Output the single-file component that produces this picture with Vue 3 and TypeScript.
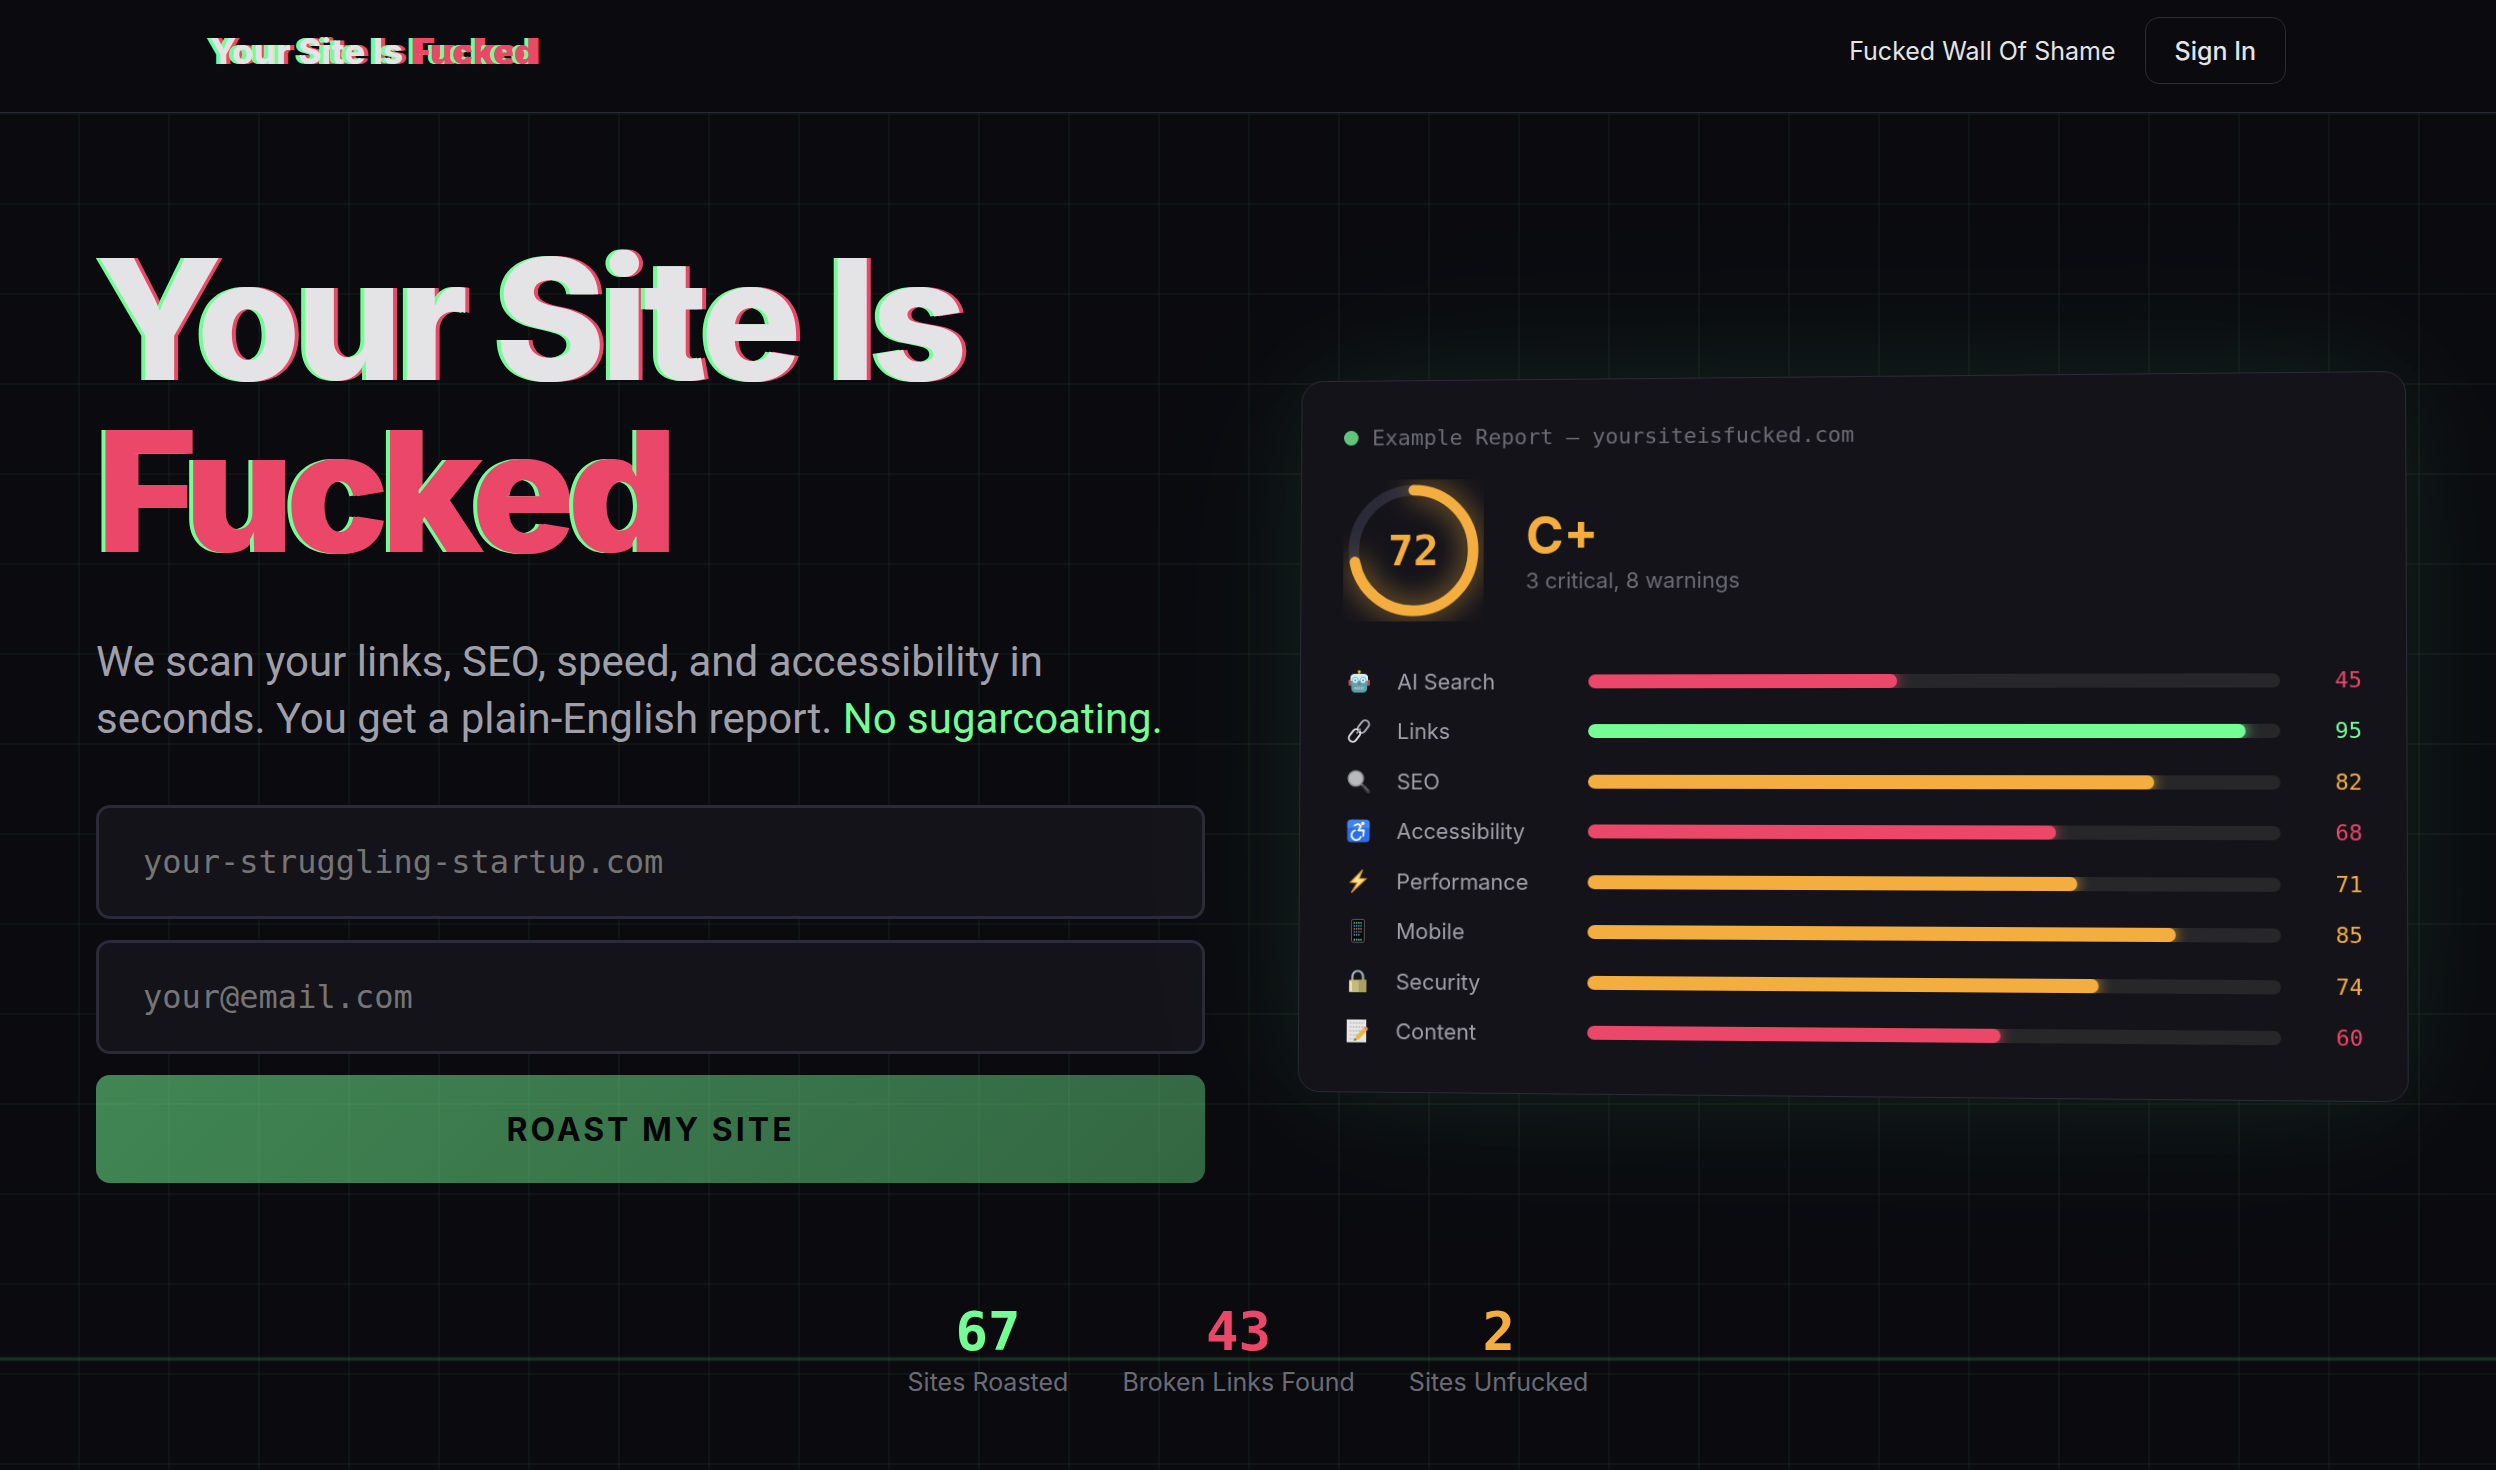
<script setup lang="ts">
import { ref } from 'vue'

type Tone = 'good' | 'warn' | 'bad'

interface Check {
  icon: string
  label: string
  score: number
  tone: Tone
}

interface Stat {
  value: number
  label: string
  tone: Tone
}

const site = ref('')
const email = ref('')

const checks: Check[] = [
  { icon: 'robot', label: 'AI Search', score: 45, tone: 'bad' },
  { icon: 'link', label: 'Links', score: 95, tone: 'good' },
  { icon: 'lens', label: 'SEO', score: 82, tone: 'warn' },
  { icon: 'access', label: 'Accessibility', score: 68, tone: 'bad' },
  { icon: 'bolt', label: 'Performance', score: 71, tone: 'warn' },
  { icon: 'phone', label: 'Mobile', score: 85, tone: 'warn' },
  { icon: 'lock', label: 'Security', score: 74, tone: 'warn' },
  { icon: 'memo', label: 'Content', score: 60, tone: 'bad' },
]

const stats: Stat[] = [
  { value: 67, label: 'Sites Roasted', tone: 'good' },
  { value: 43, label: 'Broken Links Found', tone: 'bad' },
  { value: 2, label: 'Sites Unfucked', tone: 'warn' },
]
</script>

<template>
  <div class="page">
    <header class="topbar">
      <div class="topbar-inner">
        <a class="logo glitch" href="#">Your Site Is <span class="f-word">Fucked</span></a>
        <nav class="nav">
          <a class="nav-link" href="#shame">Fucked Wall Of Shame</a>
          <button class="sign-in" type="button">Sign In</button>
        </nav>
      </div>
    </header>

    <main class="main">
      <section class="hero">
        <div class="pitch">
          <h1 class="title glitch">Your Site Is<br><span class="f-word">Fucked</span></h1>
          <p class="lead">
            We scan your links, SEO, speed, and accessibility in seconds. You get a plain-English report.
            <span class="accent">No sugarcoating.</span>
          </p>
          <form class="form" @submit.prevent>
            <input v-model="site" class="field" type="text" aria-label="Website address" placeholder="your-struggling-startup.com">
            <input v-model="email" class="field" type="email" aria-label="Email address" placeholder="your@email.com">
            <button class="roast" type="submit">ROAST MY SITE</button>
          </form>
        </div>

        <article class="card">
          <div class="card-head"><span class="dot"></span>Example Report — yoursiteisfucked.com</div>
          <div class="grade">
            <div class="ring">
              <svg class="ring-svg" viewBox="0 0 80 80" aria-hidden="true">
                <circle class="ring-track" cx="40" cy="40" r="34" />
                <circle class="ring-fill" cx="40" cy="40" r="34" pathLength="100" stroke-dasharray="72 100" transform="rotate(-90 40 40)" />
              </svg>
              <span class="ring-value">72</span>
            </div>
            <div class="verdict">
              <div class="letter">C+</div>
              <div class="summary">3 critical, 8 warnings</div>
            </div>
          </div>
          <ul class="checks">
            <li v-for="check in checks" :key="check.label" class="check">
              <svg class="icon" viewBox="0 0 24 24" aria-hidden="true">
                <g v-if="check.icon === 'robot'">
                  <path d="M12 1v5" stroke="#b8653f" stroke-width="1.6" />
                  <circle cx="12" cy="1.8" r="1.6" fill="#f2b63c" />
                  <rect x="1" y="10" width="3" height="6" rx="1" fill="#c9483c" />
                  <rect x="20" y="10" width="3" height="6" rx="1" fill="#c9483c" />
                  <path d="M3 7q1-3 5-3h8q4 0 5 3l-1 13q-1 3-4 3H8q-3 0-4-3z" fill="#56a2b0" />
                  <path d="M3 7q1-3 5-3h8q4 0 5 3v4H3z" fill="#d5eef0" />
                  <circle cx="8" cy="10.500" r="3" fill="#f4ffff" stroke="#4fb9d2" />
                  <circle cx="16" cy="10.500" r="3" fill="#f4ffff" stroke="#4fb9d2" />
                  <circle cx="8" cy="10.500" r="1" fill="#2c8095" />
                  <circle cx="16" cy="10.500" r="1" fill="#2c8095" />
                  <path d="m12 12 1.500 3h-3z" fill="#d54c46" />
                  <path d="M7 18.500h10" stroke="#c9b79f" stroke-width="2.400" stroke-dasharray="1.700 .600" />
                </g>
                <g v-else-if="check.icon === 'link'" fill="none" stroke-width="2">
                  <rect x="9.500" y="3.500" width="14" height="8" rx="4" stroke="#a9a9b2" transform="rotate(-52 16.500 7.500)" />
                  <rect x="0.500" y="12.500" width="14" height="8" rx="4" stroke="#d9dbe6" transform="rotate(-52 7.500 16.500)" />
                  <path d="m9.500 14.500 4-5" stroke="#8d8d96" />
                </g>
                <g v-else-if="check.icon === 'lens'">
                  <path d="m15 15 2.500 2.500" stroke="#9a9aa0" stroke-width="2.400" />
                  <path d="m17 17 5 5.500" stroke="#3b3b40" stroke-width="3.600" stroke-linecap="round" />
                  <path d="m17.500 16.500 4.500 5" stroke="#83838a" stroke-width="1" />
                  <circle cx="9" cy="9" r="7.800" fill="#b9babd" stroke="#85878d" stroke-width="1.600" />
                </g>
                <g v-else-if="check.icon === 'access'">
                  <rect x="0.500" y="0.500" width="23" height="23" rx="4" fill="#2c6fe4" />
                  <path d="M4 1h16q3 0 3.500 3v5H.500V4Q1 1 4 1z" fill="#5a9af0" opacity=".5" />
                  <g fill="none" stroke="#fff" stroke-width="1.800" stroke-linecap="round" stroke-linejoin="round">
                    <path d="M8 6.500 11.500 5l3 2-2.500 4.500h5.500L17 17" />
                    <path d="M8.500 11.500a5 5 0 1 0 6 6.500" />
                  </g>
                  <circle cx="16.500" cy="4.500" r="1.800" fill="#fff" />
                </g>
                <path v-else-if="check.icon === 'bolt'" d="M16.500.500 4 13l7 .500L5 23.500l15-14-7-.500z" fill="#ffe58a" stroke="#d5922b" stroke-width="1.200" />
                <g v-else-if="check.icon === 'phone'">
                  <rect x="5.500" y="0.500" width="13" height="23" rx="1.500" fill="#060608" stroke="#57575c" />
                  <g stroke-width="1.500" stroke-dasharray="1.500 .800">
                    <path d="M7.500 4h9" stroke="#67c977" />
                    <path d="M7.500 7h9" stroke="#5598c8" />
                    <path d="M7.500 10h9" stroke="#b88d67" />
                    <path d="M7.500 13h9" stroke="#8662b7" />
                    <path d="M7.500 16h7" stroke="#55a9be" />
                    <path d="M7.500 21h9" stroke="#83d9a0" />
                  </g>
                </g>
                <g v-else-if="check.icon === 'lock'">
                  <path d="M6.500 12V7.500a5.500 6 0 0 1 11 0V12" fill="none" stroke="#a7b3bf" stroke-width="2.200" />
                  <rect x="3" y="10.500" width="18" height="12.500" rx="1" fill="#c5bc79" />
                  <path d="M13 10.500h8V23h-8z" fill="#9c9458" opacity=".7" />
                  <path d="M5 12v10" stroke="#ebe5b4" stroke-width="2" />
                </g>
                <g v-else>
                  <rect x="1" y="0.500" width="20" height="23" fill="#e6e6e6" />
                  <g stroke="#aeaeae" stroke-width="1" stroke-dasharray="2 1">
                    <path d="M4 4h14M4 8h14M4 12h12M4 16h8M4 20h5" />
                  </g>
                  <path d="M10 18 18 9l3.500 3-8 8.500-5 1.500z" fill="#edb83a" />
                  <path d="m18 9 1.500-1.500q2-.500 3 1.500v2l-1 1z" fill="#ef8b8b" />
                  <path d="m8.500 22 1-2.500 1.500 1.500z" fill="#4c4438" />
                </g>
              </svg>
              <span class="check-label">{{ check.label }}</span>
              <span class="track"><span class="bar" :class="check.tone" :style="{ width: check.score + '%' }"></span></span>
              <span class="score" :class="check.tone">{{ check.score }}</span>
            </li>
          </ul>
        </article>
      </section>

      <section class="stats">
        <div v-for="stat in stats" :key="stat.label" class="stat">
          <div class="stat-value" :class="stat.tone">{{ stat.value }}</div>
          <div class="stat-label">{{ stat.label }}</div>
        </div>
      </section>
    </main>
    <div class="scanline"></div>
  </div>
</template>

<style>
body {
  background: #0a0a0f;
}
</style>

<style scoped>
* {
  box-sizing: border-box;
}

.page {
  --green: #75fd95;
  --red: #eb4768;
  --amber: #f4ae3f;
  --ink: #e4e4e7;
  --line: #2a2a38;
  --panel: #14131a;
  --mono: "DejaVu Sans Mono", monospace;
  position: relative;
  display: flex;
  flex-direction: column;
  min-height: 100vh;
  overflow: hidden;
  background: #0a0a0f;
  color: var(--ink);
  font-family: Inter, sans-serif;
}

.good { --tone: var(--green); }
.warn { --tone: var(--amber); }
.bad { --tone: var(--red); }

.topbar {
  padding: 17px 96px 28px;
  border-bottom: 1px solid var(--line);
}

.topbar-inner {
  display: flex;
  align-items: center;
  justify-content: space-between;
  max-width: 2076px;
  margin: 0 auto;
}

.glitch {
  text-shadow: -4px 0 var(--green), 4px 0 var(--red);
}

.logo {
  color: var(--ink);
  font-size: 35px;
  font-weight: 800;
  line-height: 44px;
  text-decoration: none;
}

.f-word {
  color: var(--red);
}

.nav {
  display: flex;
  align-items: center;
  gap: 29px;
}

.nav-link {
  color: var(--ink);
  font-size: 25px;
  text-decoration: none;
}

.sign-in {
  height: 67px;
  padding: 0 29px;
  border: 1px solid var(--line);
  border-radius: 14px;
  background: transparent;
  color: var(--ink);
  font: 500 25px Inter, sans-serif;
}

.main {
  flex: 1;
  padding: 120px 96px 72px;
  background-image:
    linear-gradient(rgba(117, 253, 149, 0.04) 2px, transparent 2px),
    linear-gradient(90deg, rgba(117, 253, 149, 0.04) 2px, transparent 2px);
  background-size: 90px 90px;
  background-position: calc(50% + 45px) 0;
}

.hero {
  display: grid;
  grid-template-columns: 1fr 1fr;
  align-items: center;
  gap: 86px;
}

.pitch {
  padding-bottom: 55px;
}

.title {
  margin: 0;
  font-size: 168px;
  font-weight: 800;
  line-height: 172px;
  letter-spacing: -5px;
}

.lead {
  margin: 56px 0 58px;
  color: #9f9fa9;
  font-family: Roboto, sans-serif;
  font-size: 42px;
  line-height: 57px;
}

.accent {
  color: var(--green);
}

.form {
  display: flex;
  flex-direction: column;
  gap: 21px;
}

.field {
  width: 100%;
  height: 114px;
  padding: 0 44px;
  border: 3px solid var(--line);
  border-radius: 14px;
  outline: none;
  background: var(--panel);
  color: var(--ink);
  font: 32px var(--mono);
}

.field::placeholder {
  color: #757575;
  opacity: 1;
}

.roast {
  height: 108px;
  border: 0;
  border-radius: 14px;
  background: linear-gradient(135deg, rgba(117, 253, 149, 0.51), rgba(117, 253, 149, 0.38));
  color: #050508;
  font: 700 32px Inter, sans-serif;
  letter-spacing: 3px;
}

.card {
  padding: 43px;
  border: 1px solid var(--line);
  border-radius: 22px;
  background: var(--panel);
  box-shadow: 0 0 108px rgba(117, 253, 149, 0.07), 0 0 216px rgba(117, 253, 149, 0.05);
  transform: perspective(2000px) rotateY(-3deg) rotateX(1deg);
}

.card-head {
  display: flex;
  align-items: center;
  gap: 14px;
  margin-bottom: 28px;
  color: #6b6b76;
  font: 22px/29px var(--mono);
}

.dot {
  width: 15px;
  height: 15px;
  border-radius: 50%;
  background: #60c67b;
}

.grade {
  display: flex;
  align-items: center;
  gap: 43px;
  margin-bottom: 43px;
}

.ring {
  display: grid;
  width: 144px;
  height: 144px;
}

.ring-svg,
.ring-value {
  grid-area: 1 / 1;
}

.ring-svg {
  width: 144px;
  height: 144px;
}

.ring-track,
.ring-fill {
  fill: none;
  stroke-width: 6;
}

.ring-track {
  stroke: var(--line);
}

.ring-fill {
  stroke: var(--amber);
  stroke-linecap: round;
  filter: drop-shadow(0 0 8px rgba(244, 174, 63, 0.8));
}

.ring-value {
  z-index: 1;
  place-self: center;
  color: var(--amber);
  font: 700 43px/50px var(--mono);
}

.verdict {
  padding-top: 8px;
}

.letter {
  color: var(--amber);
  font-size: 52px;
  font-weight: 700;
  line-height: 54px;
}

.summary {
  color: #6b6b76;
  font-size: 22px;
  line-height: 36px;
}

.checks {
  display: flex;
  flex-direction: column;
  justify-content: space-between;
  min-height: 389px;
  margin: 0;
  padding: 0;
  list-style: none;
}

.check {
  display: grid;
  grid-template-columns: 34px 173px 1fr 58px;
  align-items: center;
  column-gap: 22px;
  height: 36px;
}

.icon {
  justify-self: center;
  width: 24px;
  height: 24px;
}

.check-label {
  color: #9f9fa9;
  font-size: 22px;
  line-height: 36px;
}

.track {
  display: flex;
  height: 14px;
  overflow: hidden;
  border-radius: 7px;
  background: #272729;
}

.bar {
  border-radius: 7px;
  background: var(--tone);
  box-shadow: 0 0 14px var(--tone);
}

.score {
  color: var(--tone);
  font: 22px/36px var(--mono);
  text-align: right;
}

.stats {
  display: flex;
  justify-content: center;
  gap: 54px;
  margin-top: 62px;
  text-align: center;
}

.stat-value {
  color: var(--tone);
  font: 700 54px/64px var(--mono);
}

.stat-label {
  color: #6b6b76;
  font-size: 25px;
  line-height: 36px;
}

.scanline {
  position: absolute;
  right: 0;
  bottom: 110px;
  left: 0;
  height: 6px;
  background: linear-gradient(transparent, rgba(117, 253, 149, 0.18), transparent);
  pointer-events: none;
}
</style>
